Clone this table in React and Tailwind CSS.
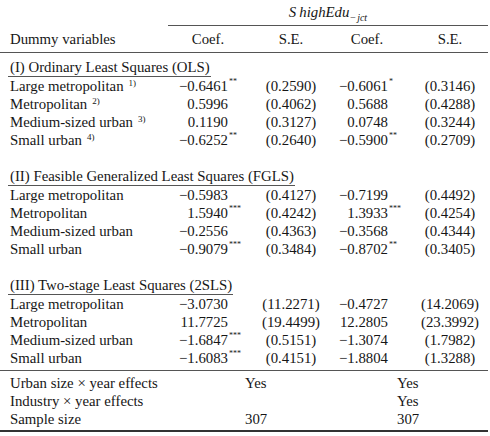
const grid = 'grid grid-cols-[168px_82px_82px_80px_76px]';

const sections = [
  {
    title: '(I) Ordinary Least Squares (OLS)',
    rows: [
      ['Large metropolitan', '1)', '−0.6461', '**', '(0.2590)', '−0.6061', '*', '(0.3146)'],
      ['Metropolitan', '2)', '0.5996', '', '(0.4062)', '0.5688', '', '(0.4288)'],
      ['Medium-sized urban', '3)', '0.1190', '', '(0.3127)', '0.0748', '', '(0.3244)'],
      ['Small urban', '4)', '−0.6252', '**', '(0.2640)', '−0.5900', '**', '(0.2709)'],
    ],
  },
  {
    title: '(II) Feasible Generalized Least Squares (FGLS)',
    rows: [
      ['Large metropolitan', '', '−0.5983', '', '(0.4127)', '−0.7199', '', '(0.4492)'],
      ['Metropolitan', '', '1.5940', '***', '(0.4242)', '1.3933', '***', '(0.4254)'],
      ['Medium-sized urban', '', '−0.2556', '', '(0.4363)', '−0.3568', '', '(0.4344)'],
      ['Small urban', '', '−0.9079', '***', '(0.3484)', '−0.8702', '**', '(0.3405)'],
    ],
  },
  {
    title: '(III) Two-stage Least Squares (2SLS)',
    rows: [
      ['Large metropolitan', '', '−3.0730', '', '(11.2271)', '−0.4727', '', '(14.2069)'],
      ['Metropolitan', '', '11.7725', '', '(19.4499)', '12.2805', '', '(23.3992)'],
      ['Medium-sized urban', '', '−1.6847', '***', '(0.5151)', '−1.3074', '', '(1.7982)'],
      ['Small urban', '', '−1.6083', '***', '(0.4151)', '−1.8804', '', '(1.3288)'],
    ],
  },
];

function Num({ value, stars }) {
  return (
    <span className="relative">
      {value}
      {stars && (
        <span className="absolute left-full top-[0px] pl-[1px] text-[8px] leading-none">{stars}</span>
      )}
    </span>
  );
}

function DataRow({ row }) {
  const [label, note, c1, s1, se1, c2, s2, se2] = row;
  return (
    <div className={`${grid} h-[18px]`}>
      <div className="pl-[10px] whitespace-nowrap">
        {label}
        {note && <span className="relative top-[-5px] ml-[5px] text-[9px] leading-none">{note}</span>}
      </div>
      <div className="pr-[22px] text-right"><Num value={c1} stars={s1} /></div>
      <div className="text-center">{se1}</div>
      <div className="pr-[24px] text-right"><Num value={c2} stars={s2} /></div>
      <div className="text-center">{se2}</div>
    </div>
  );
}

function Section({ section, first }) {
  return (
    <div>
      <div className={first ? 'pt-[5px]' : 'pt-[18px]'}>
        <span className="inline-block h-[19px] border-b border-[#555] ml-[8px] pl-[2px] pr-[1px] whitespace-nowrap">
          {section.title}
        </span>
      </div>
      {section.rows.map((r) => (
        <DataRow key={r[0]} row={r} />
      ))}
    </div>
  );
}

export default function App() {
  return (
    <div className="w-[490px] h-[436px] bg-white text-[#161616] font-serif text-[14.8px] leading-[18px]">
      <div className="w-[488px] font-['Liberation_Serif']">
        <div className={`${grid} h-[26px]`}>
          <div />
          <div className="col-span-4 border-b border-[#555] flex items-center justify-center pt-[1px] italic">
            <span>
              S<span className="ml-[3px]">highEdu</span>
              <span className="relative top-[4px] text-[10px]">−<span className="ml-[1px]">jct</span></span>
            </span>
          </div>
        </div>
        <div className={`${grid} h-[27px] border-b border-[#555] items-center`}>
          <div className="pl-[10px]">Dummy variables</div>
          <div className="text-center pr-[2px]">Coef.</div>
          <div className="text-center">S.E.</div>
          <div className="text-center pr-[10px]">Coef.</div>
          <div className="text-center">S.E.</div>
        </div>
        {sections.map((s, i) => (
          <Section key={s.title} section={s} first={i === 0} />
        ))}
        <div className="h-[4px] border-b border-[#555]" />
        <div className="pt-[3px] pb-[2px] border-b-2 border-[#333]">
          <div className={`${grid} h-[18px]`}>
            <div className="pl-[10px] whitespace-nowrap">Urban size × year effects</div>
            <div className="col-span-2 pl-[77px]">Yes</div>
            <div className="col-span-2 pl-[65px]">Yes</div>
          </div>
          <div className={`${grid} h-[18px]`}>
            <div className="pl-[10px] whitespace-nowrap">Industry × year effects</div>
            <div className="col-span-2" />
            <div className="col-span-2 pl-[65px]">Yes</div>
          </div>
          <div className={`${grid} h-[18px]`}>
            <div className="pl-[10px] whitespace-nowrap">Sample size</div>
            <div className="col-span-2 pl-[77px]">307</div>
            <div className="col-span-2 pl-[65px]">307</div>
          </div>
        </div>
      </div>
    </div>
  );
}
